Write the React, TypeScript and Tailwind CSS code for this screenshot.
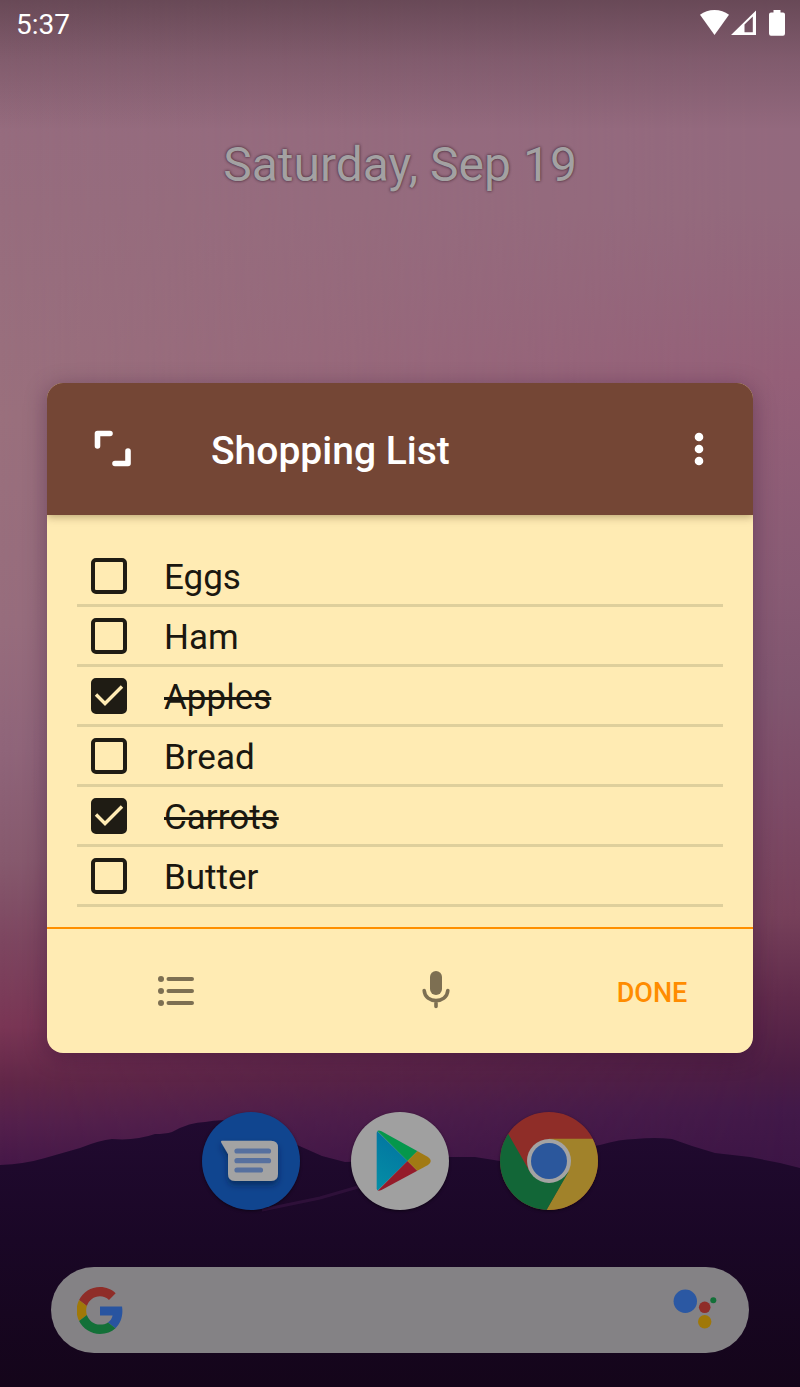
import { useState } from "react";

type Item = { name: string; done: boolean };

const initialItems: Item[] = [
  { name: "Eggs", done: false },
  { name: "Ham", done: false },
  { name: "Apples", done: true },
  { name: "Bread", done: false },
  { name: "Carrots", done: true },
  { name: "Butter", done: false },
];

function Wallpaper() {
  return (
    <svg
      className="absolute inset-0 -z-10 h-full w-full"
      viewBox="0 0 800 1387"
      preserveAspectRatio="none"
      aria-hidden="true"
    >
      <defs>
        <linearGradient id="sky" x1="0" y1="0" x2="0" y2="1">
          <stop offset="0" stopColor="#946a7f" />
          <stop offset="0.3" stopColor="#9a707d" />
          <stop offset="0.45" stopColor="#976d7d" />
          <stop offset="0.54" stopColor="#90657a" />
          <stop offset="0.62" stopColor="#875a6e" />
          <stop offset="0.68" stopColor="#7d4660" />
          <stop offset="0.74" stopColor="#7a3655" />
          <stop offset="0.78" stopColor="#622748" />
          <stop offset="0.81" stopColor="#54204c" />
          <stop offset="0.84" stopColor="#461848" />
        </linearGradient>
        <linearGradient id="skyRight" x1="0" y1="0" x2="0" y2="1">
          <stop offset="0" stopColor="#93697f" />
          <stop offset="0.15" stopColor="#93697d" />
          <stop offset="0.27" stopColor="#945f78" />
          <stop offset="0.42" stopColor="#885a74" />
          <stop offset="0.5" stopColor="#80556f" />
          <stop offset="0.58" stopColor="#7c4a66" />
          <stop offset="0.66" stopColor="#76405a" />
          <stop offset="0.72" stopColor="#602a4b" />
          <stop offset="0.77" stopColor="#4c1d44" />
          <stop offset="0.8" stopColor="#421949" />
          <stop offset="0.84" stopColor="#3c1545" />
        </linearGradient>
        <linearGradient id="fade" x1="0" y1="0" x2="1" y2="0">
          <stop offset="0" stopColor="#000" />
          <stop offset="1" stopColor="#fff" />
        </linearGradient>
        <mask id="rightMask">
          <rect width="800" height="1387" fill="url(#fade)" />
        </mask>
        <linearGradient id="topShade" x1="0" y1="0" x2="0" y2="1">
          <stop offset="0" stopColor="#1c1010" stopOpacity="0.36" />
          <stop offset="0.45" stopColor="#1c1010" stopOpacity="0.16" />
          <stop offset="1" stopColor="#1c1010" stopOpacity="0" />
        </linearGradient>
        <linearGradient id="hill" x1="0" y1="0" x2="0" y2="1">
          <stop offset="0" stopColor="#210a30" />
          <stop offset="0.45" stopColor="#1a0726" />
          <stop offset="1" stopColor="#14051a" />
        </linearGradient>
      </defs>
      <rect width="800" height="1387" fill="url(#sky)" />
      <rect width="800" height="1387" fill="url(#skyRight)" mask="url(#rightMask)" />
      <rect width="800" height="130" fill="url(#topShade)" />
      <path
        d="M0 1165 Q25 1164 45 1158 L80 1148 Q100 1140 112 1139 Q135 1141 155 1134 Q165 1134 172 1132 Q190 1122 205 1122 Q220 1119 232 1121 L262 1130 L295 1144 L322 1156 L345 1162 L400 1160 L450 1157 L475 1157 L500 1161 L560 1152 L600 1145 Q620 1139 635 1139 Q655 1137 672 1139 L692 1146 L715 1153 L750 1157 L780 1163 L800 1168 V1387 H0Z"
        fill="url(#hill)"
      />
      <path d="M262 1210 L320 1198 L358 1187" stroke="#3a1545" strokeWidth="3" fill="none" opacity="0.6" />
    </svg>
  );
}

function StatusIcons() {
  return (
    <div className="flex items-center" role="img" aria-label="Wi-Fi, mobile signal, battery">
      <svg width="29" height="26" viewBox="0 0 29 26" fill="#fff">
        <path d="M14.5 25 L0 4.800 C4 1.600 9 0 14.5 0 S25 1.600 29 4.800Z" />
      </svg>
      <svg width="26" height="26" viewBox="0 0 26 26" fill="#fff" className="ml-0.5">
        <path fillRule="evenodd" d="M0 25 L25 0.500 V25Z M13.500 14.500 V22.200 H21.800 V6.500Z" />
      </svg>
      <svg width="16" height="26" viewBox="0 0 16 26" fill="#fff" className="ml-3">
        <path d="M4.500 0 H11.500 V2.500 H14 Q16 2.500 16 4.500 V23.500 Q16 25.800 14 25.800 H2 Q0 25.800 0 23.500 V4.500 Q0 2.500 2 2.500 H4.500Z" />
      </svg>
    </div>
  );
}

function ListRow({ item, onToggle }: { item: Item; onToggle: () => void }) {
  return (
    <li className="border-b-3 border-[#decf9c]">
      <label className="flex h-[57px] items-center pl-3.5">
        <span className="grid size-9 shrink-0">
          <input
            type="checkbox"
            checked={item.done}
            onChange={onToggle}
            className="peer col-start-1 row-start-1 size-9 appearance-none rounded-[5px] border-4 border-[#1f1c14] checked:bg-[#1f1c14]"
          />
          <svg
            viewBox="0 0 36 36"
            className="pointer-events-none invisible col-start-1 row-start-1 size-9 peer-checked:visible"
            fill="none"
            stroke="#ffebb3"
            strokeWidth="3.4"
            aria-hidden="true"
          >
            <path d="M5 16.500 L14 25.500 L31 8.500" />
          </svg>
        </span>
        <span
          className={
            item.done
              ? "pl-[37px] pt-1 text-[35px] leading-[42px] text-[#1a1710] line-through"
              : "pl-[37px] pt-1 text-[35px] leading-[42px] text-[#1a1710]"
          }
        >
          {item.name}
        </span>
      </label>
    </li>
  );
}

function NoteCard() {
  const [items, setItems] = useState(initialItems);
  const toggle = (index: number) =>
    setItems(items.map((item, i) => (i === index ? { ...item, done: !item.done } : item)));

  return (
    <main className="mx-[47px] mt-[189px] overflow-hidden rounded-2xl bg-[#ffebb3] shadow-[0_4px_22px_rgba(40,10,45,0.35)]">
      <header className="relative flex h-[132px] items-center bg-[#744635] pl-[46px] pr-[45px] text-white shadow-[0_2px_8px_rgba(60,40,0,0.35)]">
        <button type="button" aria-label="Expand note">
          <svg
            width="40"
            height="40"
            viewBox="0 0 40 40"
            fill="none"
            stroke="#fff"
            strokeWidth="5.6"
            strokeLinejoin="round"
            strokeLinecap="round"
          >
            <path d="M4.500 17 V4.500 H17" />
            <path d="M22 34.500 H35 V22" />
          </svg>
        </button>
        <h1 className="grow pl-[78px] pt-1 text-[39px] font-medium leading-[48px]">Shopping List</h1>
        <button type="button" aria-label="More options">
          <svg width="18" height="34" viewBox="0 0 18 34" fill="#fff">
            <circle cx="9" cy="5" r="4.3" />
            <circle cx="9" cy="17" r="4.3" />
            <circle cx="9" cy="29" r="4.3" />
          </svg>
        </button>
      </header>
      <ul className="px-[30px] pb-5 pt-8">
        {items.map((item, i) => (
          <ListRow key={item.name} item={item} onToggle={() => toggle(i)} />
        ))}
      </ul>
      <footer className="grid h-[126px] grid-cols-[258fr_262fr_186fr] items-center justify-items-center border-t-2 border-[#ff8f00]">
        <button type="button" aria-label="Toggle list">
          <svg width="38" height="30" viewBox="0 0 38 30" stroke="#7d6f52" strokeWidth="4" strokeLinecap="round">
            <path d="M11.500 3 H35 M11.500 15 H35 M11.500 27 H35" />
            <g fill="#7d6f52" stroke="none">
              <circle cx="4" cy="3" r="3" />
              <circle cx="4" cy="15" r="3" />
              <circle cx="4" cy="27" r="3" />
            </g>
          </svg>
        </button>
        <button type="button" aria-label="Voice input">
          <svg width="30" height="40" viewBox="0 0 30 40" fill="none" stroke="#7d6f52" strokeWidth="3.6" strokeLinecap="round">
            <rect x="9" y="0" width="12" height="24" rx="6" fill="#7d6f52" stroke="none" />
            <path d="M3.200 19.500 C4 33 26 33 26.800 19.500 M15 30 V35.500" />
          </svg>
        </button>
        <button type="button" className="mr-4 pt-1 text-[27px] font-medium leading-8 text-[#ff8c00]">
          DONE
        </button>
      </footer>
    </main>
  );
}

function MessagesIcon() {
  return (
    <svg viewBox="0 0 98 98" className="size-full">
      <defs>
        <filter id="bubbleShadow" x="-20%" y="-20%" width="150%" height="160%">
          <feDropShadow dx="0" dy="4" stdDeviation="3" floodColor="#061c45" floodOpacity="0.6" />
        </filter>
      </defs>
      <circle cx="49" cy="49" r="49" fill="#10458f" />
      <path
        filter="url(#bubbleShadow)"
        d="M20 28.700 H69 Q76 28.700 76 35.500 V62 Q76 69 69 69 H33 Q26 69 26 62 V42 L19.200 30.500 Q18.600 28.700 20 28.700Z"
        fill="#a3a3a3"
      />
      <path d="M35 39 H66.500 M35 48.700 H66.500 M35 58 H58.500" stroke="#56709f" strokeWidth="5.200" strokeLinecap="round" />
    </svg>
  );
}

function PlayIcon() {
  return (
    <svg viewBox="0 0 98 98" className="size-full">
      <defs>
        <linearGradient id="playBlue" x1="0.6" y1="0" x2="0.3" y2="1">
          <stop offset="0" stopColor="#0272a0" />
          <stop offset="1" stopColor="#0590a6" />
        </linearGradient>
        <clipPath id="playShape">
          <path d="M25.700 21 Q25.700 17.200 30.500 19.200 L77 45 Q82.500 49 77 53 L30.500 78 Q25.700 80 25.700 76.500Z" />
        </clipPath>
      </defs>
      <circle cx="49" cy="49" r="49" fill="#a0a0a0" />
      <g clipPath="url(#playShape)">
        <path d="M20 13 L56.500 49 L20 85Z" fill="url(#playBlue)" />
        <path d="M20 12.500 L56.500 49 L75 30.500 V0 H20Z" fill="#05974c" />
        <path d="M20 85.500 L56.500 49 L75 67.500 V98 H20Z" fill="#951b2a" />
        <path d="M56.500 49 L75 30.500 H98 V67.500 H75Z" fill="#a17a14" />
      </g>
    </svg>
  );
}

function ChromeIcon() {
  return (
    <svg viewBox="0 0 98 98" className="size-full">
      <defs>
        <clipPath id="chromeDisc">
          <circle cx="49" cy="49" r="49" />
        </clipPath>
      </defs>
      <g clipPath="url(#chromeDisc)">
        <rect width="98" height="98" fill="#8f2d28" />
        <path d="M49 26.700 H98 V98 H46.500 L68 60 L49 49Z" fill="#a1822a" />
        <path d="M8.300 22 L30 60 L49 71 L68.500 60 L46.500 98 H0 V22Z" fill="#126637" />
        <circle cx="49" cy="49" r="22" fill="#a3a3a3" />
        <circle cx="49" cy="49" r="18" fill="#2b579c" />
      </g>
    </svg>
  );
}

function GoogleLogo() {
  return (
    <svg width="46" height="47" viewBox="0.4 0 47.200 48" aria-hidden="true">
      <path fill="#8f2d28" d="M24 9.500c3.540 0 6.710 1.220 9.210 3.600l6.850-6.850C35.900 2.380 30.470 0 24 0 14.620 0 6.510 5.380 2.560 13.220l7.980 6.190C12.430 13.720 17.740 9.500 24 9.500z" />
      <path fill="#2854a0" d="M46.980 24.550c0-1.570-.15-3.090-.38-4.550H24v9.020h12.940c-.58 2.960-2.260 5.480-4.780 7.180l7.730 6c4.510-4.180 7.090-10.360 7.090-17.650z" />
      <path fill="#a07808" d="M10.530 28.590c-.48-1.450-.76-2.990-.76-4.590s.27-3.140.76-4.590l-7.980-6.190C.92 16.460 0 20.120 0 24c0 3.880.92 7.540 2.560 10.780l7.970-6.190z" />
      <path fill="#137038" d="M24 48c6.480 0 11.930-2.130 15.890-5.810l-7.730-6c-2.150 1.450-4.920 2.300-8.160 2.300-6.260 0-11.570-4.220-13.470-9.910l-7.980 6.190C6.510 42.620 14.620 48 24 48z" />
    </svg>
  );
}

export default function App() {
  return (
    <div className="relative isolate flex min-h-screen flex-col overflow-hidden font-['Roboto',sans-serif]">
      <Wallpaper />
      <div className="flex h-[46px] items-center justify-between pl-4 pr-[15px] text-white">
        <time className="pt-1 text-[28px] leading-8">5:37</time>
        <StatusIcons />
      </div>
      <p className="mt-[89px] text-center text-[48px] leading-[59px] text-[#a3a1a2] [text-shadow:0_0_3px_rgba(40,15,30,0.9)]">
        Saturday, Sep 19
      </p>
      <NoteCard />
      <nav aria-label="Favourite apps" className="mt-[59px] flex justify-center gap-[51px] pr-px">
        <a href="#messages" aria-label="Messages" className="size-[98px] rounded-full shadow-[0_1px_3px_rgba(0,0,0,0.5)]">
          <MessagesIcon />
        </a>
        <a href="#play" aria-label="Play Store" className="size-[98px] rounded-full shadow-[0_1px_3px_rgba(0,0,0,0.5)]">
          <PlayIcon />
        </a>
        <a href="#chrome" aria-label="Chrome" className="size-[98px] rounded-full shadow-[0_1px_3px_rgba(0,0,0,0.5)]">
          <ChromeIcon />
        </a>
      </nav>
      <form
        role="search"
        className="mx-[51px] mb-[34px] mt-[57px] flex h-[86px] items-center rounded-full bg-[#848285] pl-[26px] pr-8"
        onSubmit={(e) => e.preventDefault()}
      >
        <GoogleLogo />
        <input
          type="search"
          aria-label="Search"
          className="min-w-0 grow bg-transparent px-5 text-[28px] text-[#202124] outline-none"
        />
        <button type="button" aria-label="Assistant">
          <svg width="44" height="42" viewBox="0 0 44 42">
            <circle cx="12.300" cy="12.300" r="11.700" fill="#2b58a3" />
            <circle cx="31.700" cy="18.300" r="5.800" fill="#8f2d28" />
            <circle cx="40.300" cy="11.300" r="3" fill="#137038" />
            <circle cx="31.700" cy="32.700" r="6.700" fill="#a07808" />
          </svg>
        </button>
      </form>
    </div>
  );
}
